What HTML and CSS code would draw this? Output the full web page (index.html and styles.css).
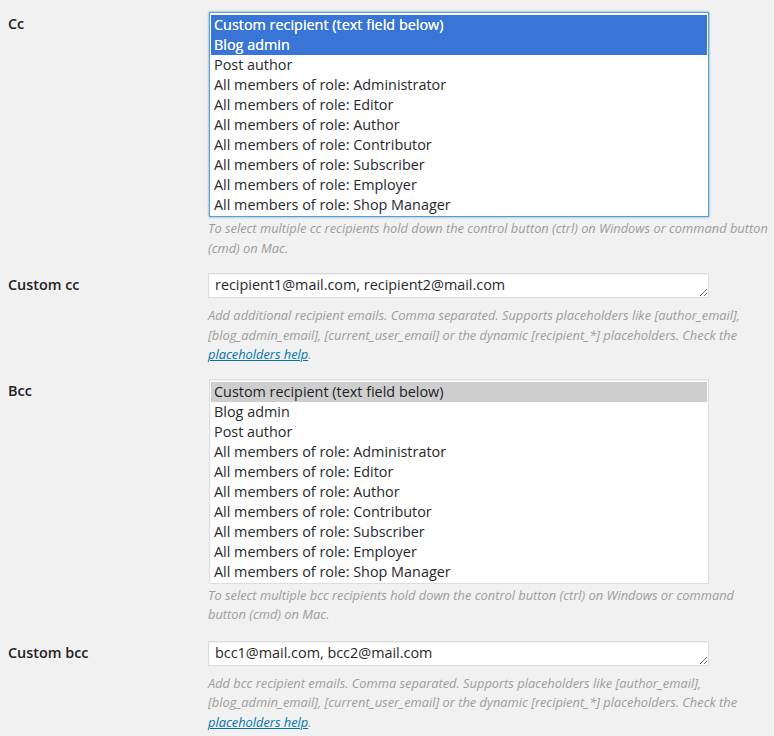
FILE: index.html
```html
<!DOCTYPE html>
<html lang="en">
<head>
<meta charset="utf-8">
<title>Recipients settings</title>
<link rel="stylesheet" href="styles.css">
</head>
<body>
<div class="form">
  <div class="row">
    <div class="label">Cc</div>
    <div class="field">
      <div class="listbox focused" role="listbox" aria-multiselectable="true">
        <div class="opt sel-blue">Custom recipient (text field below)</div>
        <div class="opt sel-blue">Blog admin</div>
        <div class="opt">Post author</div>
        <div class="opt">All members of role: Administrator</div>
        <div class="opt">All members of role: Editor</div>
        <div class="opt">All members of role: Author</div>
        <div class="opt">All members of role: Contributor</div>
        <div class="opt">All members of role: Subscriber</div>
        <div class="opt">All members of role: Employer</div>
        <div class="opt">All members of role: Shop Manager</div>
      </div>
      <p class="desc">To select multiple cc recipients hold down the control button (ctrl) on Windows or command button (cmd) on Mac.</p>
    </div>
  </div>
  <div class="row">
    <div class="label">Custom cc</div>
    <div class="field">
      <textarea class="text" rows="1">recipient1@mail.com, recipient2@mail.com</textarea>
      <p class="desc desc-after-text">Add additional recipient emails. Comma separated. Supports placeholders like [author_email], [blog_admin_email], [current_user_email] or the dynamic [recipient_*] placeholders. Check the <a href="#">placeholders help</a>.</p>
    </div>
  </div>
  <div class="row">
    <div class="label">Bcc</div>
    <div class="field">
      <div class="listbox" role="listbox" aria-multiselectable="true">
        <div class="opt sel-gray">Custom recipient (text field below)</div>
        <div class="opt">Blog admin</div>
        <div class="opt">Post author</div>
        <div class="opt">All members of role: Administrator</div>
        <div class="opt">All members of role: Editor</div>
        <div class="opt">All members of role: Author</div>
        <div class="opt">All members of role: Contributor</div>
        <div class="opt">All members of role: Subscriber</div>
        <div class="opt">All members of role: Employer</div>
        <div class="opt">All members of role: Shop Manager</div>
      </div>
      <p class="desc">To select multiple bcc recipients hold down the control button (ctrl) on Windows or command button (cmd) on Mac.</p>
    </div>
  </div>
  <div class="row">
    <div class="label">Custom bcc</div>
    <div class="field">
      <textarea class="text" rows="1">bcc1@mail.com, bcc2@mail.com</textarea>
      <p class="desc desc-after-text">Add bcc recipient emails. Comma separated. Supports placeholders like [author_email], [blog_admin_email], [current_user_email] or the dynamic [recipient_*] placeholders. Check the <a href="#">placeholders help</a>.</p>
    </div>
  </div>
</div>
</body>
</html>
```

FILE: styles.css
```css
html, body {
  margin: 0;
  padding: 0;
  background: #f1f1f1;
}
body {
  font-family: "Open Sans", "Noto Sans", sans-serif;
  color: #23282d;
  font-size: 14.4px;
}
.form {
  padding: 12px 0 0 8px;
}
.row {
  display: grid;
  grid-template-columns: 200px 566px;
  padding-bottom: 15px;
}
.row:nth-child(2) {
  padding-bottom: 14px;
}
.row:nth-child(3) {
  padding-bottom: 16px;
}
.label {
  font-weight: 600;
  font-size: 14.4px;
  line-height: 20px;
  padding-top: 2px;
  color: #1e2226;
}
.field {
  display: flex;
  flex-direction: column;
  align-items: flex-start;
}
.listbox {
  box-sizing: border-box;
  width: 500px;
  height: 205px;
  margin-left: 1px;
  padding: 2px 1px 1px 1px;
  background: #fff;
  border: 1px solid #ddd;
  box-shadow: inset 0 1px 2px rgba(0, 0, 0, 0.07);
}
.listbox.focused {
  border-color: #5b9dd9;
  box-shadow: 0 0 2px rgba(30, 140, 190, 0.8);
}
.opt {
  height: 20px;
  line-height: 20px;
  padding-left: 3px;
  font-size: 14.4px;
  color: #26292c;
  white-space: nowrap;
}
.opt.sel-blue {
  background: #3875d7;
  color: #fff;
  text-shadow: 0 0 0.4px #fff;
}
.opt.sel-gray {
  background: #cecece;
  color: #1e2226;
}
.text {
  box-sizing: border-box;
  width: 501px;
  height: 25px;
  margin: 0;
  padding: 1px 6px 2px 6px;
  font-family: "Open Sans", "Noto Sans", sans-serif;
  font-size: 14.4px;
  line-height: 20px;
  color: #26292c;
  background: #fff;
  border: 1px solid #ddd;
  box-shadow: inset 0 1px 2px rgba(0, 0, 0, 0.07);
  overflow: hidden;
  resize: vertical;
  outline: none;
}
.desc {
  margin: 2px 0 0 0;
  font-size: 12.85px;
  font-style: italic;
  line-height: 19.5px;
  color: #9c9c9c;
}
.desc-after-text {
  margin-top: 8px;
}
.desc a {
  color: #0073aa;
  text-decoration: underline;
}
```
